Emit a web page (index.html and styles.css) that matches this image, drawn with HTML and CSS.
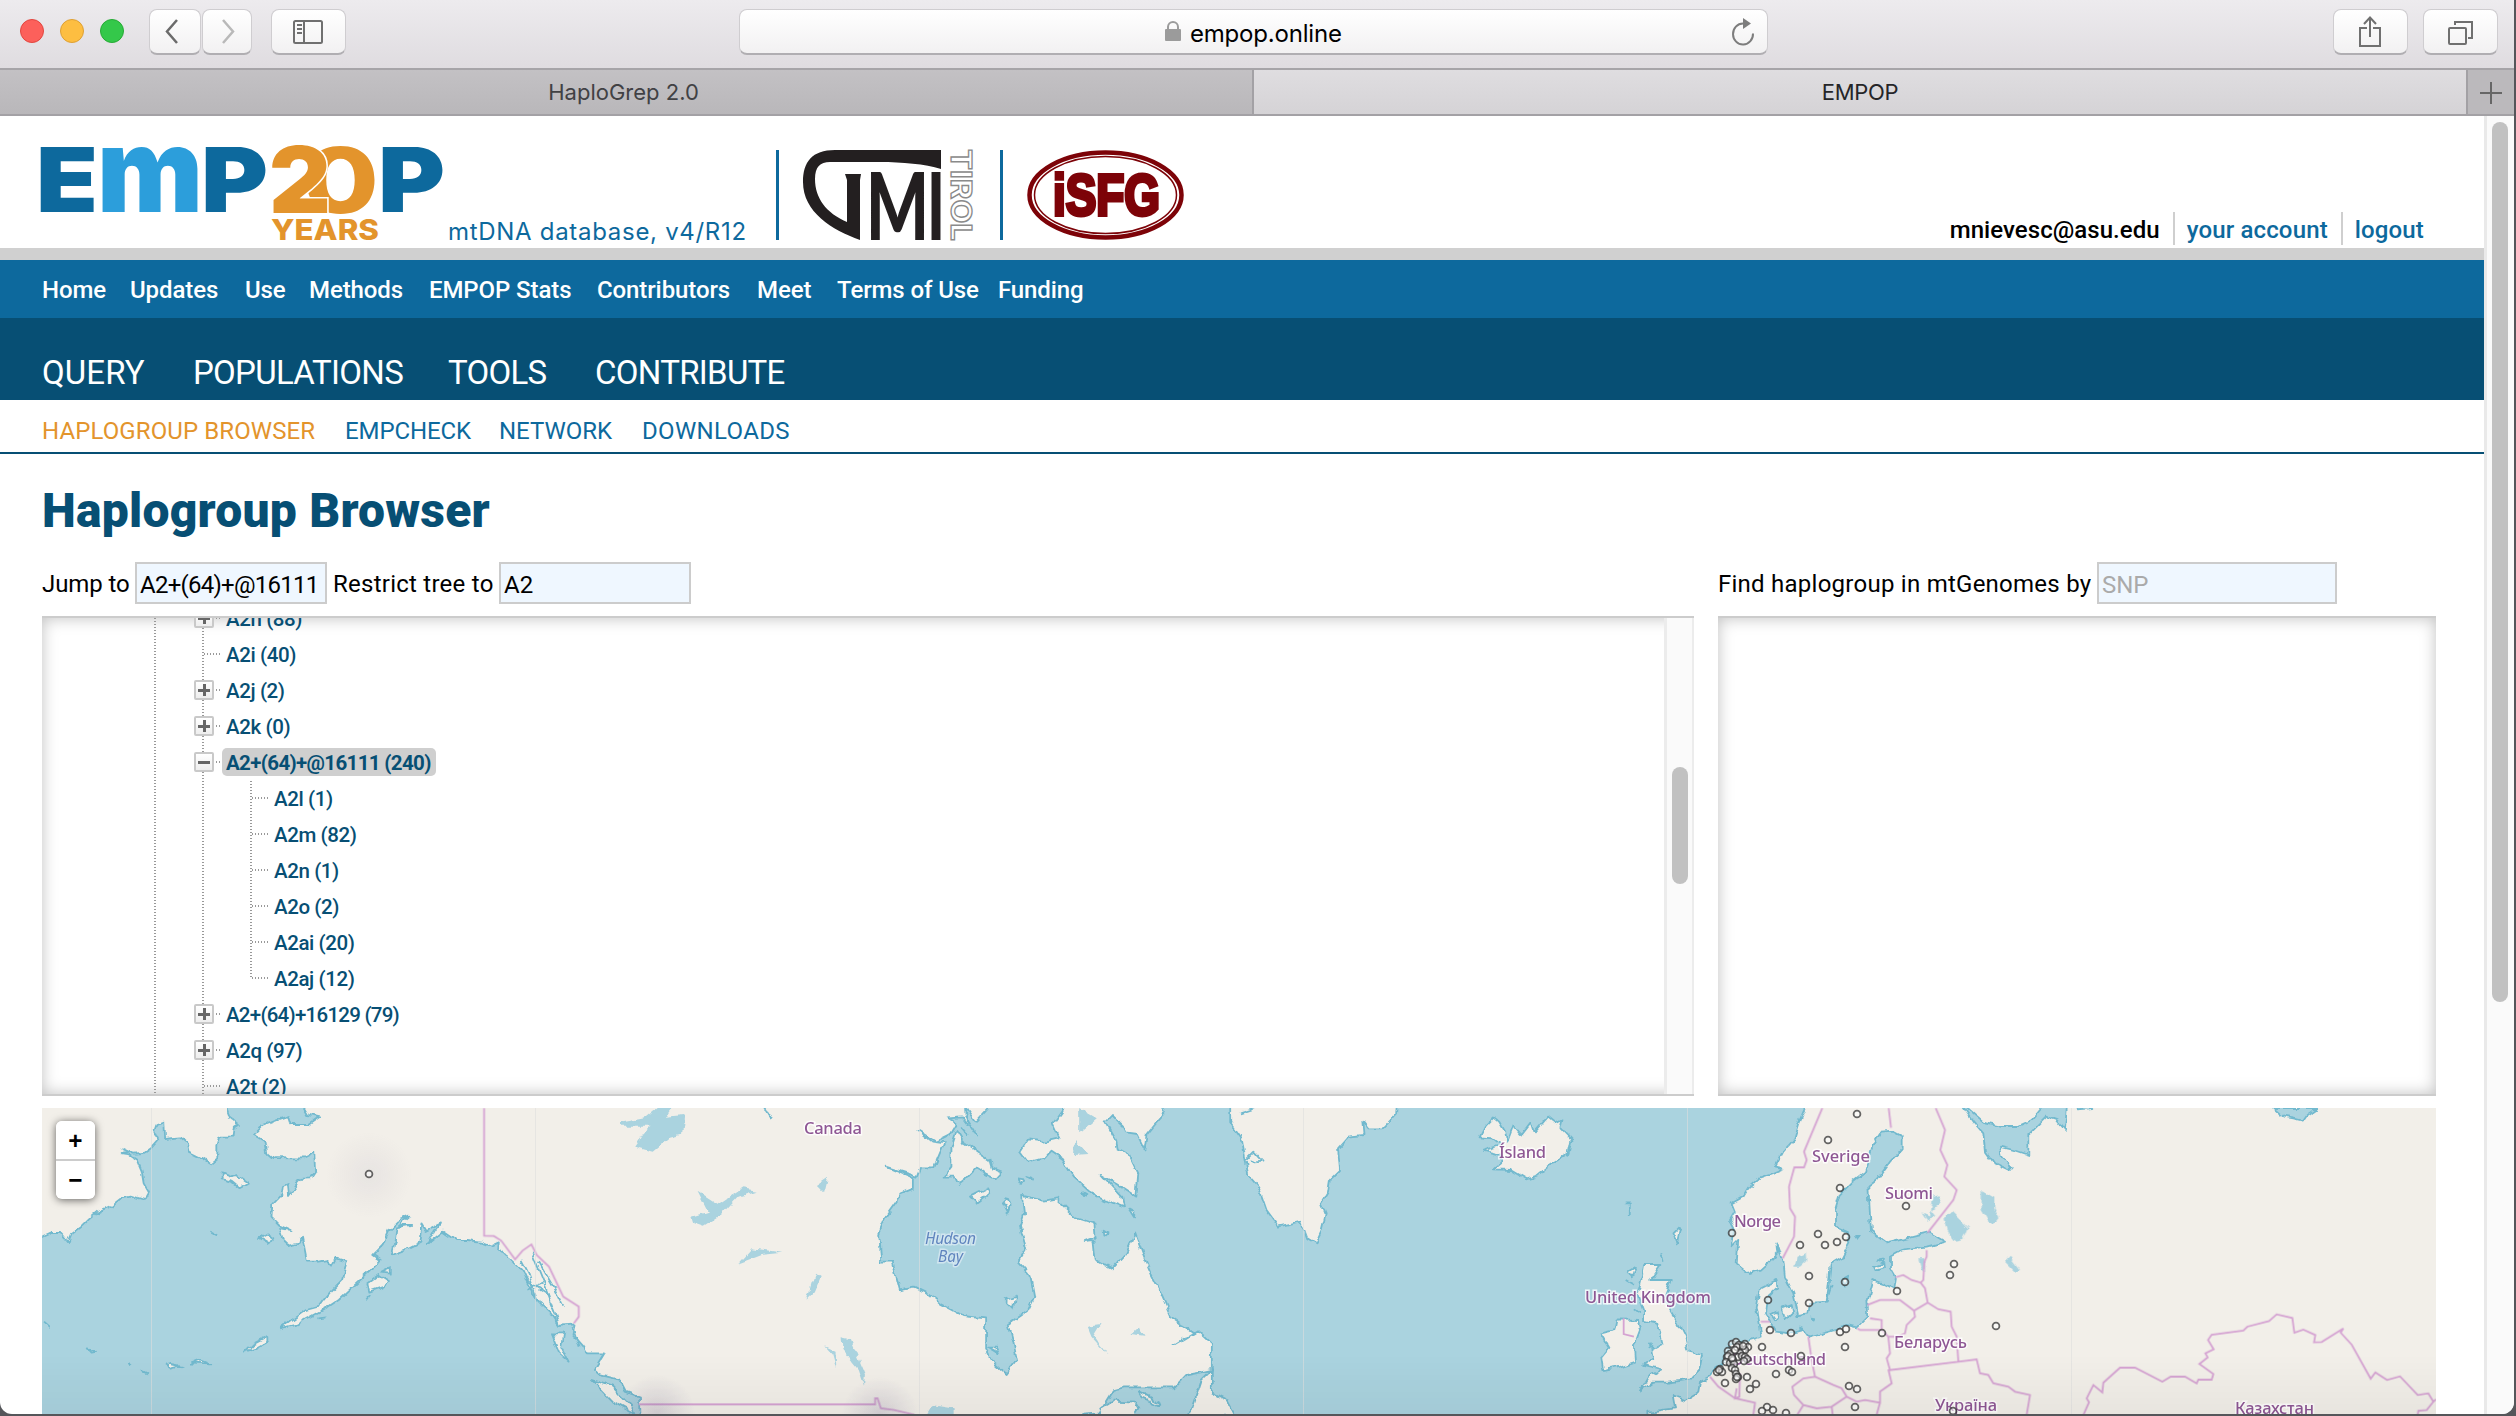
FILE: index.html
```html
<!DOCTYPE html>
<html lang="en">
<head>
<meta charset="utf-8">
<title>EMPOP</title>
<link rel="stylesheet" href="styles.css">
</head>
<body>
<div class="window">
  <div class="toolbar">
    <div class="lights"><i class="red"></i><i class="yellow"></i><i class="green"></i></div>
    <div class="btn back"><svg width="50" height="45"><path d="M27 10 17 21.500 27 33" fill="none" stroke="#6b6b6b" stroke-width="2.500"/></svg></div>
    <div class="btn fwd"><svg width="49" height="45"><path d="M20 10 30 21.500 20 33" fill="none" stroke="#b9b9b9" stroke-width="2.500"/></svg></div>
    <div class="btn side"><svg width="73" height="45"><g fill="none" stroke="#707070" stroke-width="2"><rect x="22" y="11" width="28" height="22" rx="1.500"/><path d="M32 11v22M25 15h5M25 19h5M25 23h5"/></g></svg></div>
    <div class="address">
      <svg class="lock" width="16" height="21"><path d="M3 9V6a5 5 0 0 1 10 0v3" fill="none" stroke="#9b9b9b" stroke-width="2"/><rect y="8" width="16" height="12" rx="1" fill="#9b9b9b"/></svg>
      <span>empop.online</span>
      <svg class="reload" width="26" height="30"><path d="M12 6.500a10 10.500 0 1 0 10 10" fill="none" stroke="#7d7d7d" stroke-width="2"/><path d="M12 1v11l8-5.500z" fill="#7d7d7d"/></svg>
    </div>
    <div class="btn share"><svg width="74" height="45"><g fill="none" stroke="#707070" stroke-width="2"><path d="M33 18h-7v18h20V18h-7M36 27V8M30 14l6-6.500 6 6.500"/></g></svg></div>
    <div class="btn tabsbtn"><svg width="74" height="45"><g fill="none" stroke="#707070" stroke-width="2"><rect x="25" y="18" width="17" height="16" rx="1"/><path d="M31 15v-3h17v16h-4"/></g></svg></div>
  </div>
  <div class="tabs">
    <div class="tab t1">HaploGrep 2.0</div>
    <div class="tab t2">EMPOP</div>
    <div class="newtab"><svg width="46" height="44"><path d="M12 23h22M23 12v22" stroke="#666" stroke-width="2"/></svg></div>
  </div>
  <div class="view">
    <main class="page">
      <header class="header">
        <svg class="logo" width="410" height="110" viewBox="38 138 410 110">
          <g font-family="Inter" font-weight="800">
            <text x="36" y="212" font-size="90" font-weight="900" fill="#0d699d" textLength="62" lengthAdjust="spacingAndGlyphs">E</text>
            <text x="97" y="212" font-size="118" font-weight="900" fill="#2c9edb" textLength="106" lengthAdjust="spacingAndGlyphs">m</text>
            <text x="201" y="212" font-size="90" font-weight="900" fill="#0d699d" textLength="67" lengthAdjust="spacingAndGlyphs">P</text>
            <text x="378" y="212" font-size="90" font-weight="900" fill="#0d699d" textLength="67" lengthAdjust="spacingAndGlyphs">P</text>
            <text x="302" y="213" font-size="91" fill="#e3942c" textLength="77" lengthAdjust="spacingAndGlyphs">0</text>
            <text x="269" y="213" font-size="92" font-weight="900" fill="#e3942c" stroke="#fff" stroke-width="3" paint-order="stroke" textLength="62" lengthAdjust="spacingAndGlyphs">2</text>
            <text x="271" y="240" font-size="29" fill="#e3942c" textLength="108" lengthAdjust="spacingAndGlyphs">YEARS</text>
          </g>
        </svg>
        <span class="version">mtDNA database, v4/R12</span>
        <svg class="gmi" width="175" height="90" viewBox="800 150 175 90">
          <path d="M941 150H835C812 150 803 162 803 182 803 212 832 230 860 240V180L861 174H845L847 180V222C826 213 815 198 815 179 815 167 820 162 830 162H880C902 162 925 164 941 169Z" fill="#231f20"/>
          <g font-family="Lato" font-weight="900" fill="#231f20">
            <text x="866" y="240" font-size="94" textLength="63" lengthAdjust="spacingAndGlyphs">M</text>
            <text x="927" y="240" font-size="94" textLength="18" lengthAdjust="spacingAndGlyphs">I</text>
          </g>
          <text transform="translate(951 149) rotate(90)" font-family="Inter" font-size="28" font-weight="700" fill="#fff" stroke="#8a8a8a" stroke-width="1.300" textLength="92" lengthAdjust="spacingAndGlyphs">TIROL</text>
        </svg>
        <svg class="isfg" width="160" height="90" viewBox="1025 150 160 90">
          <g fill="none" stroke="#7d0308"><ellipse cx="1105.500" cy="195" rx="76" ry="42.500" stroke-width="4.500"/><ellipse cx="1105.500" cy="195" rx="71" ry="38.500" stroke-width="1.500"/></g>
          <text x="1053" y="215" font-family="Liberation Sans" font-weight="700" font-size="58" fill="#7d0308" stroke="#7d0308" stroke-width="4" textLength="107" lengthAdjust="spacingAndGlyphs">iSFG</text>
        </svg>
        <div class="user"><span>mnievesc@asu.edu</span><a>your account</a><a>logout</a></div>
      </header>
      <nav class="nav1"><a class="n1">Home</a><a class="n2">Updates</a><a class="n3">Use</a><a class="n4">Methods</a><a class="n5">EMPOP Stats</a><a class="n6">Contributors</a><a class="n7">Meet</a><a class="n8">Terms of Use</a><a>Funding</a></nav>
      <nav class="nav2"><a class="q">QUERY</a><a class="p">POPULATIONS</a><a class="t">TOOLS</a><a>CONTRIBUTE</a></nav>
      <nav class="nav3"><a class="on">HAPLOGROUP BROWSER</a><a class="e">EMPCHECK</a><a class="n">NETWORK</a><a class="d">DOWNLOADS</a></nav>
      <h1>Haplogroup Browser</h1>
      <div class="columns">
        <section class="left">
          <div class="form"><label class="jump">Jump to</label><input class="in1" value="A2+(64)+@16111"><label class="restrict">Restrict tree to</label><input class="in2" value="A2"></div>
          <div class="panel treepanel">
            <div class="treewrap">
              <ul class="tree">
                <li><div class="row"><i class="joint"><b class="plus"></b></i><a>A2h (88)</a></div></li>
                <li><div class="row"><i class="joint"></i><a>A2i (40)</a></div></li>
                <li><div class="row"><i class="joint"><b class="plus"></b></i><a>A2j (2)</a></div></li>
                <li><div class="row"><i class="joint"><b class="plus"></b></i><a>A2k (0)</a></div></li>
                <li><div class="row"><i class="joint"><b></b></i><a class="sel">A2+(64)+@16111 (240)</a></div>
                  <ul class="sub">
                    <li class="row"><i class="joint"></i><a>A2l (1)</a></li>
                    <li class="row"><i class="joint"></i><a>A2m (82)</a></li>
                    <li class="row"><i class="joint"></i><a>A2n (1)</a></li>
                    <li class="row"><i class="joint"></i><a>A2o (2)</a></li>
                    <li class="row"><i class="joint"></i><a>A2ai (20)</a></li>
                    <li class="row"><i class="joint"></i><a>A2aj (12)</a></li>
                  </ul></li>
                <li><div class="row"><i class="joint"><b class="plus"></b></i><a class="long">A2+(64)+16129 (79)</a></div></li>
                <li><div class="row"><i class="joint"><b class="plus"></b></i><a>A2q (97)</a></div></li>
                <li><div class="row"><i class="joint"></i><a>A2t (2)</a></div></li>
              </ul>
            </div>
            <div class="treebar"><div class="treethumb"></div></div>
          </div>
        </section>
        <section class="right">
          <div class="form"><label class="find">Find haplogroup in mtGenomes by</label><input class="in3" placeholder="SNP"></div>
          <div class="panel"></div>
        </section>
      </div>
      <div class="map">
        <svg class="mapart" width="2394" height="306" viewBox="42 1108 2394 306">
          <defs>
            <filter id="rough" filterUnits="userSpaceOnUse" x="0" y="1060" width="2516" height="380"><feTurbulence type="fractalNoise" baseFrequency=".1" numOctaves="2" seed="4"/><feDisplacementMap in="SourceGraphic" scale="7" xChannelSelector="R" yChannelSelector="G"/></filter>
            <radialGradient id="heat"><stop offset="0" stop-color="#786e96" stop-opacity=".08"/><stop offset="1" stop-color="#786e96" stop-opacity="0"/></radialGradient>
            <radialGradient id="heat2"><stop offset="0" stop-color="#786e96" stop-opacity=".22"/><stop offset="1" stop-color="#786e96" stop-opacity="0"/></radialGradient>
            <linearGradient id="fade" x2="0" y2="1"><stop offset="0" stop-opacity="0"/><stop offset="1" stop-opacity=".04"/></linearGradient>
          </defs>
          <rect x="42" y="1108" width="2394" height="306" fill="#aad3df"/>
          <g filter="url(#rough)">
            <!-- Siberia, Alaska and the Aleutians -->
            <g class="land" transform="translate(0 1080) scale(.40816 .33333)">
              <path d="M60 40V490L103 468 125 456 148 456 158 470 168 486 176 462 200 440 218 418 238 398 270 380 300 352 320 347 355 360 365 338 352 310 347 275 335 240 318 226 298 222 320 218 298 205 330 224 350 222 370 205 388 180 378 150 383 132 400 125 402 177 440 172 458 190 462 215 495 235 515 250 530 235 530 200 537 170 570 170 572 150 588 138 560 110 540 40Z"/>
              <path d="M745 40V84L755 105 782 112 755 135 712 135 705 108 680 118 645 135 622 165 650 185 655 220 668 234 725 235 745 235 770 220 772 270 760 292 740 293 725 315 708 345 705 312 693 318 690 345 667 375 665 410 685 435 712 450 686 444 695 480 708 495 735 488 740 470 752 545 780 545 800 540 815 558 825 535 850 545 838 600 810 635 780 680 750 690 715 720 688 745 725 735 770 705 800 685 830 660 865 620 905 575 930 540 912 525 940 490 955 450 975 425 1005 410 980 435 1005 435 972 442 968 480 960 523 990 510 1030 485 1035 430 1045 450 1078 430 1065 452 1048 492 1085 455 1115 480 1145 480 1180 485 1205 497 1222 487 1220 510 1250 535 1280 570 1295 610 1320 665 1350 700 1370 735 1410 730 1405 765 1430 800 1440 820 1480 820 1465 850 1455 870 1470 885 1520 900 1535 935 1568 950 1570 1060H2649V1004L2694 1000 2729 930 2754 922 2879 922 2909 885 2939 878 2969 870V790L2934 750 2875 795 2925 758 2869 710 2844 640 2819 580 2799 520 2781 460 2759 520 2724 568 2684 540 2679 480 2655 483 2682 470 2679 430 2639 415 2589 355 2559 362 2504 348 2509 400 2499 440 2514 505 2494 545 2524 585 2534 650 2519 690 2469 733 2479 780 2489 840 2464 882 2434 850 2416 805V715L2359 708 2304 672 2269 638 2239 620 2204 628 2187 545 2159 545 2154 460 2174 400 2209 340 2239 325V295L2170 260 2248 290 2257 262 2289 262 2314 190 2284 185 2250 150 2295 185 2327 165 2344 130 2324 115 2355 112 2369 135 2367 84V40Z"/>
              <path d="M543 280 562 290 580 285 607 308 587 322 570 305 543 298ZM635 475 655 460 672 475 660 493ZM900 612 930 585 955 605 940 620 905 635ZM935 575 955 562 955 578ZM600 815 620 790 655 768 655 785 625 805ZM470 848 490 838 515 850ZM406 856 420 852 445 858 420 866ZM215 808 235 815 222 818ZM1350 760 1380 760 1375 800 1393 845 1370 820ZM1450 900 1500 920 1550 985 1555 1002 1500 965Z"/>
              <path d="M515 455 532 466M108 728 124 745M315 845 320 855M345 868 360 877M1278 540 1295 580 1320 665M1302 515 1330 600 1370 735M1320 545 1360 630 1380 680M1290 600 1340 640 1360 700M900 655 907 645M780 715 800 712M1405 740 1420 800M1290 630 1330 610" fill="none"/>
            </g>
            <!-- Arctic Canada -->
            <g class="land" transform="translate(620 1080) scale(.40816 .33333)">
              <path d="M825 150 845 190 880 220 905 240 910 262 935 275 920 295 895 280 875 262 845 300 830 315 820 290 793 290 812 260 812 200Z"/>
              <path d="M1110 40 1090 84 1060 135 1075 175 1040 185 1000 178 980 215 1000 248 1040 235 1055 215 1085 240 1110 290 1150 335 1190 360 1235 382 1230 350 1180 285 1215 310 1265 350 1270 280 1250 230 1220 210 1215 180 1190 125 1205 105 1235 140 1240 160 1268 165 1285 208 1290 165 1310 135 1335 100 1320 40ZM850 84 873 125 903 84 900 40ZM860 350 905 322 900 345 875 368ZM938 370 950 355 957 375 950 398ZM975 295 990 298 985 315ZM998 285 1010 290 1012 302ZM1185 452 1197 462 1187 473ZM1248 385 1263 395 1262 412ZM1130 335 1145 345 1140 350ZM902 800 920 800 928 820ZM945 660 970 650 965 685ZM1450 870 1425 900 1395 1010H1510L1490 965 1450 940ZM1270 935 1325 970 1320 975 1280 955ZM1150 1040 1180 985 1210 962 1260 965 1270 985 1240 1040Z"/>
              <path d="M835 140 855 170M845 110 875 165M355 84 373 120" fill="none"/>
            </g>
            <!-- Greenland, Iceland and the British Isles -->
            <g class="land" transform="translate(1240 1080) scale(.40816 .33333)">
              <path d="M-24 40V130L5 180 15 250 20 285 45 320 65 390 95 440 150 425 165 475 185 490 200 450 210 400 200 370 215 340 220 300 245 270 240 205 265 170 305 165 302 125 315 145 350 145 385 100 388 40Z"/>
              <path d="M622 112 635 125 650 155 655 185 670 135 690 165 712 130 720 160 755 110 775 130 790 120 785 145 812 180 805 220 760 255 725 290 703 298 665 270 622 268 640 250 640 225 595 212 640 195 620 175 587 172 600 140Z"/>
              <path d="M990 555 1030 555 1005 600 1058 600 1040 660 1065 710 1090 770 1100 815 1132 825 1125 870 1105 895 1050 905 1010 905 980 932 1000 890 1035 868 990 855 1015 835 1010 805 1035 790 1025 735 990 725 990 690 975 640 985 590ZM925 718 975 720 980 750 965 800 968 845 925 862 890 870 885 830 905 800 885 760 920 750ZM950 575 970 560 960 595ZM1062 460 1080 438 1070 490ZM1002 790 1010 797 1003 802Z"/>
              <path d="M940 370H955L955 408M1032 520 1038 548M945 600 965 615M15 240 35 215 55 242 25 245M0 100 40 84M965 685 980 700" fill="none"/>
            </g>
            <!-- Continental Europe -->
            <g class="land" transform="translate(1660 1080) scale(.33333)">
              <path d="M435 40V84L415 130 400 180 370 215 345 262 370 268 330 285 300 295 265 325 250 350 215 370 225 395 210 420 225 450 215 500 235 480 230 550 270 582 300 572 330 545 355 520 352 490 370 545 375 590 400 640 415 705 445 700 450 672 500 668 512 555 545 535 568 490 560 455 525 440 525 390 540 340 575 305 615 275 640 190 660 158 700 155 728 170 728 205 690 245 650 300 625 320 633 455 680 490 740 475 810 458 855 485 800 500 730 508 690 530 690 565 705 590 700 625 670 610 640 600 622 665 625 710 590 745 560 738 500 755 445 770 430 750 390 760 350 755 315 700 320 655 352 625 350 600 300 625 290 680 305 770 270 780 215 790 190 840 150 888 120 905 115 935 75 960 38 945 45 985-35 995V1060H2400V40Z"/>
              <path d="M365 685 395 675 400 700 375 722ZM333 700 350 692 355 712 345 718ZM645 560 670 550 672 565 650 572ZM655 538 672 535 668 548ZM548 600 565 590 555 620ZM458 710 468 712 463 720ZM585 465 600 465 592 475Z"/>
              <path d="M515 615 500 662M418 745 430 750" fill="none"/>
            </g>
            <g class="sea" transform="translate(1660 1080) scale(.33333)">
              <path d="M895 60 970 125 1030 138 1075 138 1115 120 1145 84 1150 60H1222L1215 150 1190 120 1160 110 1105 165 1105 225 1060 210 1020 200 1025 225 1055 260 1045 272 1000 250 975 215 970 160 940 125ZM1250 60V88L1300 84 1310 60ZM1840 84 1870 110 1900 115 1928 122 1940 105 1970 84Z"/>
            </g>
          </g>
          <!-- Lakes -->
          <g fill="#aad3df" filter="url(#rough)">
            <g transform="translate(620 1080) scale(.40816 .33333)"><path d="M0 128 60 115 90 84H125L110 110 158 105 152 165 120 175 80 215 35 200 60 155 75 140 0 140ZM190 335 240 375 300 325 335 332 290 350 250 405 205 440 180 430 175 410 215 395ZM480 315 510 290 500 340ZM292 550 325 505 400 518 345 525ZM478 578 492 590 475 640 457 662ZM543 772 565 778 600 880 598 918 585 870 545 810ZM503 802 528 815 530 868 520 825ZM1125 84 1168 115 1125 160ZM1115 180 1145 225 1112 228ZM1145 740 1175 735 1160 765 1195 825 1155 770ZM1248 765 1270 740 1285 770ZM750 1005 765 975 815 985 815 1010Z"/></g>
            <g transform="translate(1660 1080) scale(.33333)"><path d="M400 560 410 530 440 515 442 540 420 560ZM850 410 875 395 925 445 910 480 885 485 860 450ZM965 330 1000 350 1000 385 1015 415 1000 435 985 425 965 390ZM1035 545 1050 530 1080 570 1065 575ZM775 535 793 535 795 580 785 570ZM785 400 810 410 820 350 845 345 835 380 815 390 830 410 800 422Z"/></g>
          </g>
          <!-- National borders -->
          <g class="border">
            <g transform="translate(0 1080) scale(.40816 .33333)"><path d="M1186 84V467L1210 468 1228 482 1262 538 1280 512 1302 493 1315 525 1345 560 1380 650 1418 680 1418 710 1406 730M1565 973H2144V955L2150 955 2158 985 2190 990 2240 1004"/></g>
            <g transform="translate(1660 1080) scale(.33333)"><path d="M487 84 432 215 440 240 432 262H403L387 320 390 385 405 410 402 470 368 535M686 84 693 143M827 84 855 150 841 210 862 255 853 290 890 330 880 360 803 458M800 510V530L793 545 790 600 782 608 755 600 730 585 706 592M782 608 795 625 803 668 762 692 740 675 720 660H660L622 675M803 668 835 688 872 695 875 740 890 770 895 845M762 692 765 710 740 735 735 760 715 770H685M592 745 600 750H665V720L630 715M665 750 685 770 690 820 680 835 690 870 895 845 950 838 960 880 985 885 1000 910 1045 920 1065 935 1110 945 1100 1004M685 868 695 910 660 935V968L615 960 590 965 560 950 545 925 520 915 465 890 455 840 445 770M465 890 430 895 397 920 402 945 430 975 470 985 515 980 560 950M660 968 650 1004M150 890 175 920 225 955 285 968 280 1004M240 880 238 950 225 955 230 925M430 975 412 1004M515 980 518 1004M302 725H330"/></g>
            <g transform="translate(2050 1000) scale(.33333)"><path d="M100 1245 117 1207 110 1195 130 1155 157 1177 160 1148 210 1103H255L337 1145 362 1130H405L440 1150 445 1139H485L490 1122 448 1092 473 1072 466 1060 491 1048 474 1020 485 1004 580 992 592 980 657 963 680 943 727 954 733 998 760 989 796 1005 792 1027 815 1026 880 985 872 998 905 1034 962 1136 976 1117 1011 1140 1050 1129 1103 1185 1135 1180 1150 1205 1130 1230 1105 1232 1103 1245M1150 1205 1158 1198"/></g>
            <g transform="translate(1240 1080) scale(.40816 .33333)"><path d="M940 715V762L965 770"/></g>
          </g>
          <path d="M151.500 1108v306M535.500 1108v306M919.500 1108v306M1303.500 1108v306M1687.500 1108v306M2071.500 1108v306" stroke="#ddd" stroke-opacity=".6"/>
          <circle cx="369" cy="1175" r="43" fill="url(#heat)"/><circle cx="657" cy="1413" r="38" fill="url(#heat2)"/><circle cx="880" cy="1415" r="38" fill="url(#heat2)"/>
          <g class="names">
            <text x="804" y="1134" textLength="58">Canada</text><text x="1499" y="1158" textLength="47">Ísland</text><text x="1812" y="1162" textLength="58">Sverige</text><text x="1885" y="1199" textLength="48">Suomi</text><text x="1734" y="1227" textLength="47">Norge</text><text x="1585" y="1303" textLength="126">United Kingdom</text><text x="1732" y="1365" textLength="94">Deutschland</text><text x="1894" y="1348" textLength="73">Беларусь</text><text x="1935" y="1411" textLength="62">Україна</text><text x="2235" y="1414" textLength="79">Казахстан</text>
          </g>
          <g class="bay"><text x="925" y="1244" textLength="51">Hudson</text><text x="938" y="1262" textLength="25">Bay</text></g>
          <g class="sites" id="sites"></g>
          <rect x="42" y="1354" width="2394" height="60" fill="url(#fade)"/>
        </svg>
        <div class="zoom"><button>+</button><button>−</button></div>
      </div>
    </main>
    <div class="pagebar"><div class="pagethumb"></div></div>
  </div>
</div>
<script src="sites.js"></script>
</body>
</html>
```
FILE: styles.css
```css
* { box-sizing: border-box; }
body { margin: 0; width: 2516px; height: 1416px; overflow: hidden; background: #55565a; font-family: Roboto, sans-serif; color: #000; }
.window { width: 2514px; height: 1414px; overflow: hidden; background: #fff; border-radius: 0 0 12px 12px; display: flex; flex-direction: column; }
svg { display: block; flex: none; }
.toolbar { height: 70px; flex: none; display: flex; align-items: flex-start; padding: 9px 0 0 20px; background: linear-gradient(#edebee, #dfdce0); border-bottom: 2px solid #a6a4a8; }
.lights { display: flex; gap: 16px; padding-top: 10px; width: 129px; }
.lights i { width: 24px; height: 24px; border-radius: 50%; border: 1px solid #e2463f; background: #fc605b; }
.lights .yellow { background: #fdbe41; border-color: #dea034; }
.lights .green { background: #34c84a; border-color: #27aa35; }
.btn, .address { height: 46px; border: 1px solid #cfcdd0; border-bottom: 2px solid #b0aeb2; border-radius: 8px; background: linear-gradient(#fff, #f2f1f2); overflow: hidden; }
.back { width: 52px; margin-right: 1px; }
.fwd { width: 50px; margin-right: 19px; }
.side { width: 75px; margin-right: 393px; }
.address { width: 1029px; display: flex; align-items: center; padding-left: 425px; margin-right: 565px; font: 24px Inter, sans-serif; }
.address span { width: 152px; margin-left: 9px; padding-top: 3px; white-space: nowrap; letter-spacing: -.2px; }
.reload { margin-left: 389px; }
.share { width: 75px; margin-right: 15px; }
.tabsbtn { width: 75px; }
.tabs { height: 46px; flex: none; display: flex; border-bottom: 2px solid #a3a1a5; background: #bbb9bc; font: 22px/44px Inter, sans-serif; text-align: center; color: #414144; }
.t1 { width: 1254px; padding-right: 5px; border-right: 2px solid #a3a1a5; background: linear-gradient(#c3c1c4, #b9b7ba); letter-spacing: 0; }
.t2 { width: 1214px; border-right: 2px solid #a3a1a5; background: linear-gradient(#dfdde0, #d5d3d6); color: #252528; letter-spacing: -.3px; }
.view { flex: 1; display: flex; }
.page { width: 2484px; height: 1298px; overflow: hidden; }
.pagebar { flex: 1; border-left: 3px solid #e9e9e9; background: #fafafa; padding: 6px 0 0 5px; }
.pagethumb { width: 16px; height: 880px; border-radius: 8px; background: #c1c1c1; }
.header { height: 144px; border-bottom: 12px solid #d0d0d0; display: flex; align-items: flex-start; padding: 22px 0 0 38px; }
.header svg { overflow: visible; }
.version { width: 328px; margin-top: 78px; font: 24px/32px Inter, sans-serif; letter-spacing: .7px; color: #0d699d; white-space: nowrap; }
.gmi { margin-top: 12px; box-sizing: content-box; border-left: 3px solid #0d699d; padding-left: 21px; width: 175px; }
.isfg { margin-top: 12px; box-sizing: content-box; margin-left: 25px; border-left: 3px solid #0d699d; padding-left: 22px; width: 160px; }
.user { margin: 74px 0 0 auto; padding-right: 60px; display: flex; font-size: 24px; line-height: 37px; height: 33px; font-weight: 500; white-space: nowrap; }
.user span { letter-spacing: .05px; }
.user a { color: #0d699d; border-left: 2px solid #cfcfcf; margin-left: 13px; padding-left: 12px; letter-spacing: .15px; }
nav { display: flex; padding-left: 42px; white-space: nowrap; }
.nav1 { height: 58px; background: #0d699d; color: #fff; font-size: 24px; line-height: 60px; font-weight: 500; letter-spacing: -.1px; }
.n1 { width: 88px; } .n2 { width: 115px; } .n3 { width: 64px; } .n4 { width: 120px; } .n5 { width: 168px; } .n6 { width: 160px; } .n7 { width: 80px; } .n8 { width: 161px; }
.nav2 { height: 82px; background: #074f74; color: #fff; font-size: 33px; line-height: 109px; letter-spacing: -.7px; }
.q { width: 151px; letter-spacing: .1px; } .p { width: 255px; } .t { width: 147px; }
.nav3 { height: 54px; border-bottom: 2px solid #074f74; color: #0d699d; font-size: 24px; line-height: 63px; }
.on { width: 303px; color: #e3942c; letter-spacing: .1px; } .e { width: 154px; letter-spacing: -.1px; } .n { width: 143px; } .d { letter-spacing: .35px; }
h1 { margin: 0; height: 108px; padding: 25px 0 0 42px; font-size: 48px; line-height: 64px; font-weight: 900; color: #074f74; letter-spacing: .25px; }
.columns { display: flex; gap: 24px; padding-left: 42px; height: 534px; }
.left { width: 1652px; }
.right { width: 718px; }
.form { height: 54px; display: flex; font-size: 24px; line-height: 44px; white-space: nowrap; }
.jump { width: 93px; letter-spacing: -.1px; }
.restrict { width: 166px; margin-left: 6px; letter-spacing: .25px; }
.find { width: 379px; letter-spacing: .25px; }
input { height: 42px; width: 192px; border: 2px solid #ccc; background: #eff7ff; padding: 3px 3px 0; font: 24px Roboto, sans-serif; border-radius: 0; outline: 0; }
.in1 { letter-spacing: -.75px; }
.in3 { width: 240px; }
input::placeholder { color: #aaa; }
.panel { height: 480px; border-top: 2px solid #ccc; border-bottom: 2px solid #ccc; box-shadow: inset 0 0 16px rgba(0,0,0,.25); overflow: hidden; display: flex; }
.treewrap { width: 1622px; padding-left: 152px; background: repeating-linear-gradient(#999 0 1px, transparent 1px 3px) 112px 0 / 2px 100% no-repeat; }
ul { list-style: none; margin: 0; padding: 0; }
.tree { margin-top: -17px; background: repeating-linear-gradient(#999 0 1px, transparent 1px 3px) 8px 0 / 2px 100% no-repeat; }
.sub { margin-left: 48px; background: repeating-linear-gradient(#999 0 1px, transparent 1px 3px) 8px 0 / 2px 197px no-repeat; }
.row { height: 36px; display: flex; align-items: center; }
.joint { width: 28px; height: 36px; padding-top: 7px; background: repeating-linear-gradient(90deg, #999 0 1px, transparent 1px 3px) 10px 16px / 18px 2px no-repeat; }
.joint b { display: block; width: 20px; height: 20px; border: 2px solid #c9c9c9; border-radius: 2px; background: linear-gradient(#666, #666) center / 12px 3px no-repeat, linear-gradient(#fff, #eee); }
.joint .plus { background: linear-gradient(#666, #666) center / 12px 3px no-repeat, linear-gradient(#666, #666) center / 3px 12px no-repeat, linear-gradient(#fff, #eee); }
.row a { padding: 0 5px 0 4px; height: 28px; line-height: 30px; font-size: 20.500px; font-weight: 500; color: #074f74; border-radius: 5px; letter-spacing: -.4px; white-space: nowrap; margin-bottom: 2px; }
.row .long { letter-spacing: -.75px; }
.row .sel { background: #cfcfcf; font-weight: 700; letter-spacing: -.65px; }
.treebar { width: 30px; border-left: 3px solid #ececec; border-right: 2px solid #ececec; background: #fafafa; padding: 149px 0 0 5px; }
.treethumb { width: 16px; height: 117px; border-radius: 8px; background: #c1c1c1; }
.map { margin: 12px 0 0 42px; width: 2394px; height: 306px; position: relative; }
.land path, .sea path { stroke: #72b9ce; stroke-width: 1.800px; vector-effect: non-scaling-stroke; stroke-linejoin: round; }
.land { fill: #f2efe9; }
.sea { fill: #aad3df; }
.border path { fill: none; stroke: #d5a3d2; stroke-width: 1.800px; vector-effect: non-scaling-stroke; }
.names text, .bay text { font: 500 16.500px "Noto Sans", sans-serif; fill: #8e5794; stroke: #fff; stroke-opacity: .8; stroke-width: 3px; paint-order: stroke; }
.bay text { font-style: italic; font-weight: 400; font-size: 15.500px; fill: #6085be; stroke: #d9eaf3; }
.sites circle { fill: #fff; fill-opacity: .6; stroke: #333; stroke-opacity: .75; stroke-width: 1.800px; }
.zoom { position: absolute; left: 14px; top: 13px; width: 39px; height: 78px; background: #fff; border-radius: 6px; box-shadow: 0 1px 8px rgba(0,0,0,.6); overflow: hidden; }
.zoom button { display: block; width: 100%; height: 38px; padding: 0; border: 0; background: #fff; font: 700 25px/36px "Noto Sans", sans-serif; color: #000; }
.zoom button + button { border-top: 2px solid #ccc; }
```
FILE: sites.js
```js
// Sampling sites, as [x, y] on the map canvas
const sites = [
  [369, 1174], [1857, 1114], [1828, 1140], [1840, 1188], [1906, 1206], [1732, 1233],
  [1818, 1234], [1800, 1245], [1825, 1245], [1837, 1242], [1846, 1237], [1809, 1276],
  [1845, 1282], [1809, 1303], [1768, 1300], [1954, 1264], [1950, 1275], [1897, 1291],
  [1996, 1326], [1770, 1330], [1791, 1333], [1840, 1332], [1846, 1329], [1882, 1333],
  [1845, 1347], [1762, 1347], [1801, 1356], [1776, 1374], [1789, 1370], [1792, 1372],
  [1849, 1386], [1857, 1389], [1855, 1407], [1725, 1383], [1747, 1377], [1756, 1384],
  [1750, 1389], [1767, 1407], [1762, 1411], [1773, 1410], [1786, 1413], [1953, 1411],
  [1732, 1344], [1736, 1342], [1739, 1345], [1745, 1344], [1748, 1347], [1737, 1347],
  [1743, 1350], [1745, 1350], [1728, 1351], [1730, 1354], [1727, 1357], [1728, 1356],
  [1740, 1353], [1738, 1357], [1742, 1356], [1745, 1357], [1747, 1359], [1744, 1361],
  [1726, 1362], [1730, 1363], [1733, 1360], [1734, 1364], [1732, 1368], [1735, 1370],
  [1720, 1369], [1717, 1372], [1722, 1372], [1719, 1370], [1736, 1374], [1738, 1377],
  [1736, 1379], [1737, 1377], [1743, 1346], [1735, 1350], [1732, 1358]
];
const layer = document.getElementById("sites");
for (const [x, y] of sites) {
  const dot = document.createElementNS("http://www.w3.org/2000/svg", "circle");
  dot.setAttribute("cx", x);
  dot.setAttribute("cy", y);
  dot.setAttribute("r", 3.4);
  layer.appendChild(dot);
}
```
